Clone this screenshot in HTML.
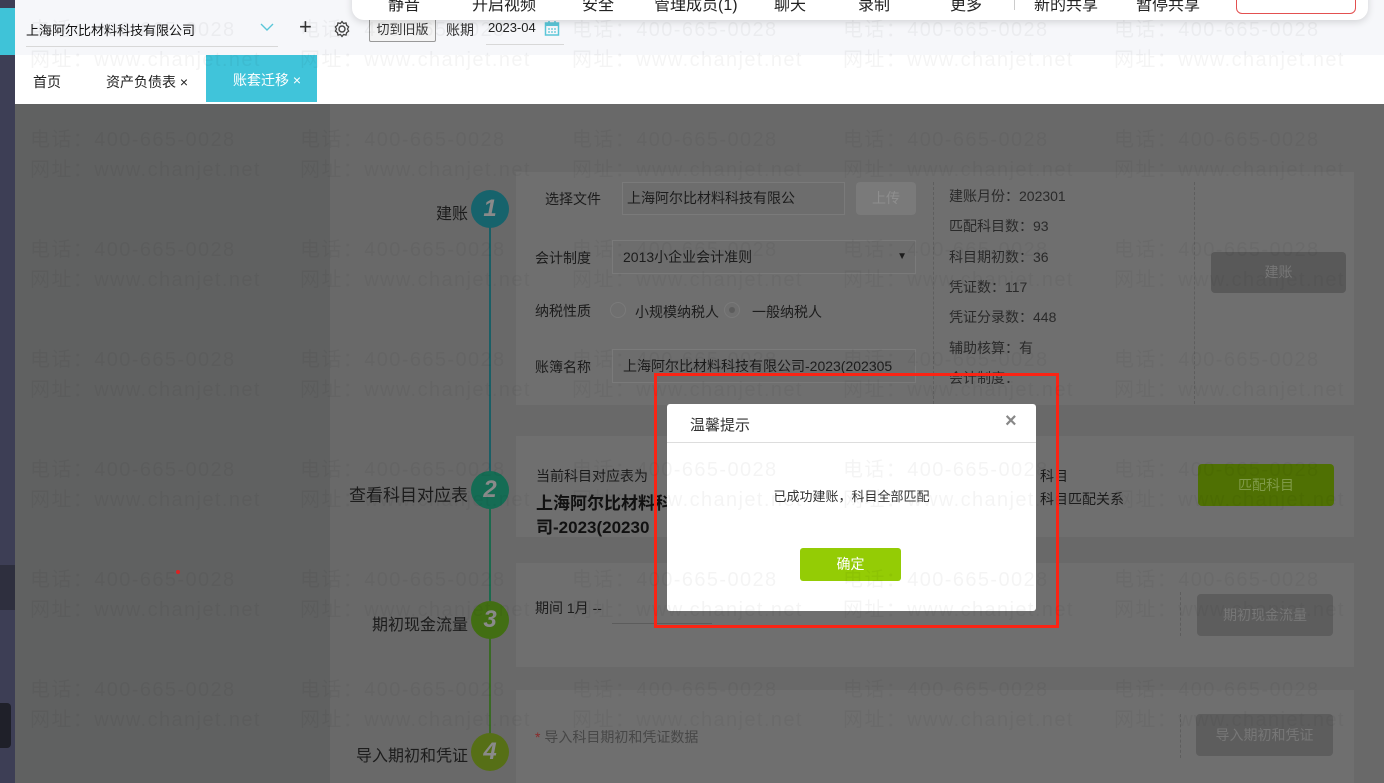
<!DOCTYPE html>
<html><head><meta charset="utf-8"><style>
*{margin:0;padding:0;box-sizing:border-box}
body{width:1384px;height:783px;overflow:hidden;position:relative;font-family:"Liberation Sans","Noto Sans CJK SC",sans-serif;font-size:14px;color:#222;background:#646464}
.a{position:absolute}
.wm{position:absolute;font-size:20px;color:rgba(0,0,0,0.045);white-space:nowrap;line-height:30px;z-index:50;pointer-events:none;letter-spacing:1.4px}
.card{position:absolute;background:#6f6f6f}
.btn{position:absolute;border-radius:4px;color:#8a8a8a;text-align:center;font-size:14px}
.inp{position:absolute;border:1px solid #7a7a7a;background:#6d6d6d;color:#1c1c1c;font-size:14px;padding-left:4px}
.circ{position:absolute;width:38px;height:38px;border-radius:50%;color:#8a8a8a;font-style:italic;font-weight:bold;font-size:24px;text-align:center;line-height:38px}
.lbl{position:absolute;font-size:16px;color:#1c1c1c;text-align:right;width:200px}
.info{position:absolute;left:949px;font-size:14px;color:#2a2a2a}
</style></head><body>
<div class="a" style="left:0;top:0;width:15px;height:783px;background:#3d3e55"></div>
<div class="a" style="left:0;top:8px;width:15px;height:47px;background:#3fc3d8"></div>
<div class="a" style="left:0;top:565px;width:15px;height:45px;background:#2e2f3e"></div>
<div class="a" style="left:0;top:703px;width:11px;height:45px;background:#1f2029;border-radius:0 4px 4px 0"></div>
<div class="a" style="left:15px;top:0;width:1369px;height:55px;background:#f6f7fa"></div>
<div class="a" style="left:26px;top:20px;font-size:13px;color:#111">上海阿尔比材料科技有限公司</div>
<div class="a" style="left:26px;top:46px;width:252px;height:1px;background:#d8d8d8"></div>
<svg class="a" style="left:260px;top:23px" width="14" height="9" viewBox="0 0 14 9"><path d="M1 1l6 6 6-6" fill="none" stroke="#5ac6d8" stroke-width="1.4"/></svg>
<div class="a" style="left:299px;top:15px;font-size:22px;color:#333;line-height:24px">+</div>
<svg class="a" style="left:333px;top:20px" width="18" height="18" viewBox="0 0 18 18"><circle cx="9" cy="9" r="3" fill="none" stroke="#444" stroke-width="1.4"/><path d="M9 1.5l1.6 2 2.4-.6.6 2.4 2 1.6-1.1 2.1 1.1 2.1-2 1.6-.6 2.4-2.4-.6L9 16.5l-1.6-2-2.4.6-.6-2.4-2-1.6L3.5 9 2.4 6.9l2-1.6.6-2.4 2.4.6z" fill="none" stroke="#444" stroke-width="1.3"/></svg>
<div class="a" style="left:369px;top:17px;width:67px;height:25px;border:1px solid #999;border-radius:2px;background:#f4f4f4;font-size:13px;text-align:center;line-height:23px;color:#333">切到旧版</div>
<div class="a" style="left:446px;top:20px;font-size:14px;color:#333">账期</div>
<div class="a" style="left:488px;top:20px;font-size:13px;color:#222">2023-04</div>
<svg class="a" style="left:544px;top:20px" width="16" height="16" viewBox="0 0 16 16"><rect x="1.5" y="3" width="13" height="12" fill="none" stroke="#5ac6d8" stroke-width="1.5"/><rect x="1.5" y="3" width="13" height="3" fill="#5ac6d8"/><path d="M4 9h2M7 9h2M10 9h2M4 12h2M7 12h2M10 12h2" stroke="#5ac6d8" stroke-width="1.3"/><path d="M5 1v3M11 1v3" stroke="#5ac6d8" stroke-width="1.5"/></svg>
<div class="a" style="left:486px;top:44px;width:78px;height:1px;background:#d8d8d8"></div>
<div class="a" style="left:352px;top:-10px;width:1016px;height:30px;background:#fff;border-radius:0 0 12px 12px;box-shadow:0 2px 8px rgba(0,0,0,0.15);z-index:60;font-size:16px;color:#222">
<span class="a" style="left:36px;top:1px">静音</span><span class="a" style="left:120px;top:1px">开启视频</span><span class="a" style="left:230px;top:1px">安全</span><span class="a" style="left:302px;top:1px">管理成员(1)</span><span class="a" style="left:422px;top:1px">聊天</span><span class="a" style="left:506px;top:1px">录制</span><span class="a" style="left:598px;top:1px">更多</span><span class="a" style="left:662px;top:6px;width:1px;height:14px;background:#ccc"></span><span class="a" style="left:682px;top:1px">新的共享</span><span class="a" style="left:784px;top:1px">暂停共享</span><span class="a" style="left:884px;top:2px;width:120px;height:22px;border:1px solid #e35050;border-radius:6px"></span></div>
<div class="a" style="left:15px;top:55px;width:1369px;height:49px;background:#fff"></div>
<div class="a" style="left:33px;top:72px;font-size:14px;color:#222">首页</div>
<div class="a" style="left:106px;top:72px;font-size:14px;color:#222">资产负债表 ×</div>
<div class="a" style="left:206px;top:55px;width:111px;height:47px;background:#40c4da;color:#fff;font-size:14px;line-height:50px;padding-left:27px">账套迁移 ×</div>
<div class="a" style="left:15px;top:104px;width:315px;height:679px;background:#606161"></div>
<div class="a" style="left:330px;top:104px;width:1054px;height:679px;background:#696969"></div>
<div class="card" style="left:516px;top:172px;width:838px;height:233px"></div>
<div class="card" style="left:516px;top:436px;width:838px;height:101px"></div>
<div class="card" style="left:516px;top:563px;width:838px;height:104px"></div>
<div class="card" style="left:516px;top:690px;width:838px;height:93px"></div>
<div class="a" style="left:489px;top:226px;width:2px;height:246px;background:#1a5f66"></div>
<div class="a" style="left:489px;top:508px;width:2px;height:94px;background:#1b6a4e"></div>
<div class="a" style="left:489px;top:638px;width:2px;height:96px;background:#3a6a25"></div>
<div class="circ" style="left:471px;top:190px;background:#17636c">1</div>
<div class="circ" style="left:471px;top:471px;background:#156c54">2</div>
<div class="circ" style="left:471px;top:601px;background:#426e13">3</div>
<div class="circ" style="left:471px;top:733px;background:#566f16">4</div>
<div class="lbl" style="left:268px;top:200px">建账</div>
<div class="lbl" style="left:268px;top:481px;font-size:17px">查看科目对应表</div>
<div class="lbl" style="left:268px;top:611px">期初现金流量</div>
<div class="lbl" style="left:268px;top:742px">导入期初和凭证</div>
<div class="a" style="left:545px;top:189px;color:#1c1c1c">选择文件</div>
<div class="inp" style="left:622px;top:182px;width:223px;height:33px;line-height:31px">上海阿尔比材料科技有限公</div>
<div class="btn" style="left:856px;top:182px;width:60px;height:33px;line-height:33px;background:#7a7a7a;color:#8e8e8e">上传</div>
<div class="a" style="left:535px;top:248px;color:#1c1c1c">会计制度</div>
<div class="inp" style="left:612px;top:240px;width:304px;height:34px;line-height:32px;padding-left:10px">2013小企业会计准则<span style="position:absolute;right:8px;top:0;font-size:10px">▼</span></div>
<div class="a" style="left:535px;top:301px;color:#1c1c1c">纳税性质</div>
<div class="a" style="left:610px;top:302px;width:16px;height:16px;border:1px solid #7a7a7a;border-radius:50%"></div>
<div class="a" style="left:635px;top:302px;color:#1c1c1c">小规模纳税人</div>
<div class="a" style="left:724px;top:302px;width:16px;height:16px;border:1px solid #7a7a7a;border-radius:50%"><div style="width:6px;height:6px;background:#5c5c5c;border-radius:50%;margin:4px"></div></div>
<div class="a" style="left:752px;top:302px;color:#1c1c1c">一般纳税人</div>
<div class="a" style="left:535px;top:357px;color:#1c1c1c">账簿名称</div>
<div class="inp" style="left:612px;top:349px;width:304px;height:34px;line-height:32px;padding-left:10px;overflow:hidden;white-space:nowrap">上海阿尔比材料科技有限公司-2023(202305</div>
<div class="a" style="left:933px;top:182px;height:222px;border-left:1px dashed #5e5e5e"></div>
<div class="a" style="left:1194px;top:182px;height:222px;border-left:1px dashed #5e5e5e"></div>
<div class="info" style="top:186px">建账月份：202301</div>
<div class="info" style="top:216px">匹配科目数：93</div>
<div class="info" style="top:247px">科目期初数：36</div>
<div class="info" style="top:277px">凭证数：117</div>
<div class="info" style="top:307px">凭证分录数：448</div>
<div class="info" style="top:338px">辅助核算：有</div>
<div class="info" style="top:368px;height:16px;overflow:hidden">会计制度：</div>
<div class="btn" style="left:1211px;top:252px;width:135px;height:41px;line-height:41px;background:#595959;color:#777">建账</div>
<div class="a" style="left:536px;top:466px;color:#1c1c1c">当前科目对应表为</div>
<div class="a" style="left:536px;top:489px;color:#111;font-weight:bold;font-size:17px">上海阿尔比材料科</div>
<div class="a" style="left:536px;top:513px;color:#111;font-weight:bold;font-size:17px">司-2023(20230</div>
<div class="a" style="left:1040px;top:466px;color:#1c1c1c">科目</div>
<div class="a" style="left:1040px;top:489px;color:#1c1c1c">科目匹配关系</div>
<div class="btn" style="left:1198px;top:464px;width:136px;height:42px;line-height:42px;background:#4f7003;color:#7f9a48">匹配科目</div>
<div class="a" style="left:535px;top:598px;color:#1c1c1c">期间 1月 --</div>
<div class="a" style="left:612px;top:623px;width:100px;height:1px;background:#5c5c5c"></div>
<div class="a" style="left:1180px;top:592px;height:44px;border-left:1px dashed #5e5e5e"></div>
<div class="btn" style="left:1197px;top:594px;width:136px;height:42px;line-height:42px;background:#5d5d5d;color:#777">期初现金流量</div>
<div class="a" style="left:535px;top:727px;color:#474747"><span style="color:#8a2a2a">*</span> 导入科目期初和凭证数据</div>
<div class="a" style="left:1180px;top:714px;height:44px;border-left:1px dashed #5e5e5e"></div>
<div class="btn" style="left:1196px;top:714px;width:137px;height:42px;line-height:42px;background:#5d5d5d;color:#777">导入期初和凭证</div>
<div class="a" style="left:176px;top:570px;width:4px;height:4px;background:#d22;border-radius:50%"></div>
<div class="a" style="left:654px;top:373px;width:405px;height:255px;border:3px solid #fa2414;z-index:40"></div>
<div class="a" style="left:667px;top:404px;width:369px;height:207px;background:#fff;border-radius:3px;z-index:40">
<div class="a" style="left:23px;top:10px;font-size:15px;color:#333">温馨提示</div>
<div class="a" style="left:338px;top:6px;font-size:20px;color:#888;font-weight:bold">×</div>
<div class="a" style="left:0;top:38px;width:369px;height:1px;background:#ddd"></div>
<div class="a" style="left:0;top:82px;width:369px;text-align:center;font-size:13px;color:#333">已成功建账，科目全部匹配</div>
<div class="a" style="left:133px;top:144px;width:101px;height:33px;background:#94cc05;border-radius:3px;color:#fff;text-align:center;line-height:33px;font-size:14px">确定</div>
</div>
<div id="w"></div>
<script>
var s='';var xs=[30,300,572,843,1114];var ys=[15,125,235,345,455,565,675];
ys.forEach(function(y){xs.forEach(function(x){s+='<div class="wm" style="left:'+x+'px;top:'+y+'px">电话：400-665-0028<br>网址：www.chanjet.net</div>';});});
document.getElementById('w').innerHTML=s;
</script>
</body></html>
